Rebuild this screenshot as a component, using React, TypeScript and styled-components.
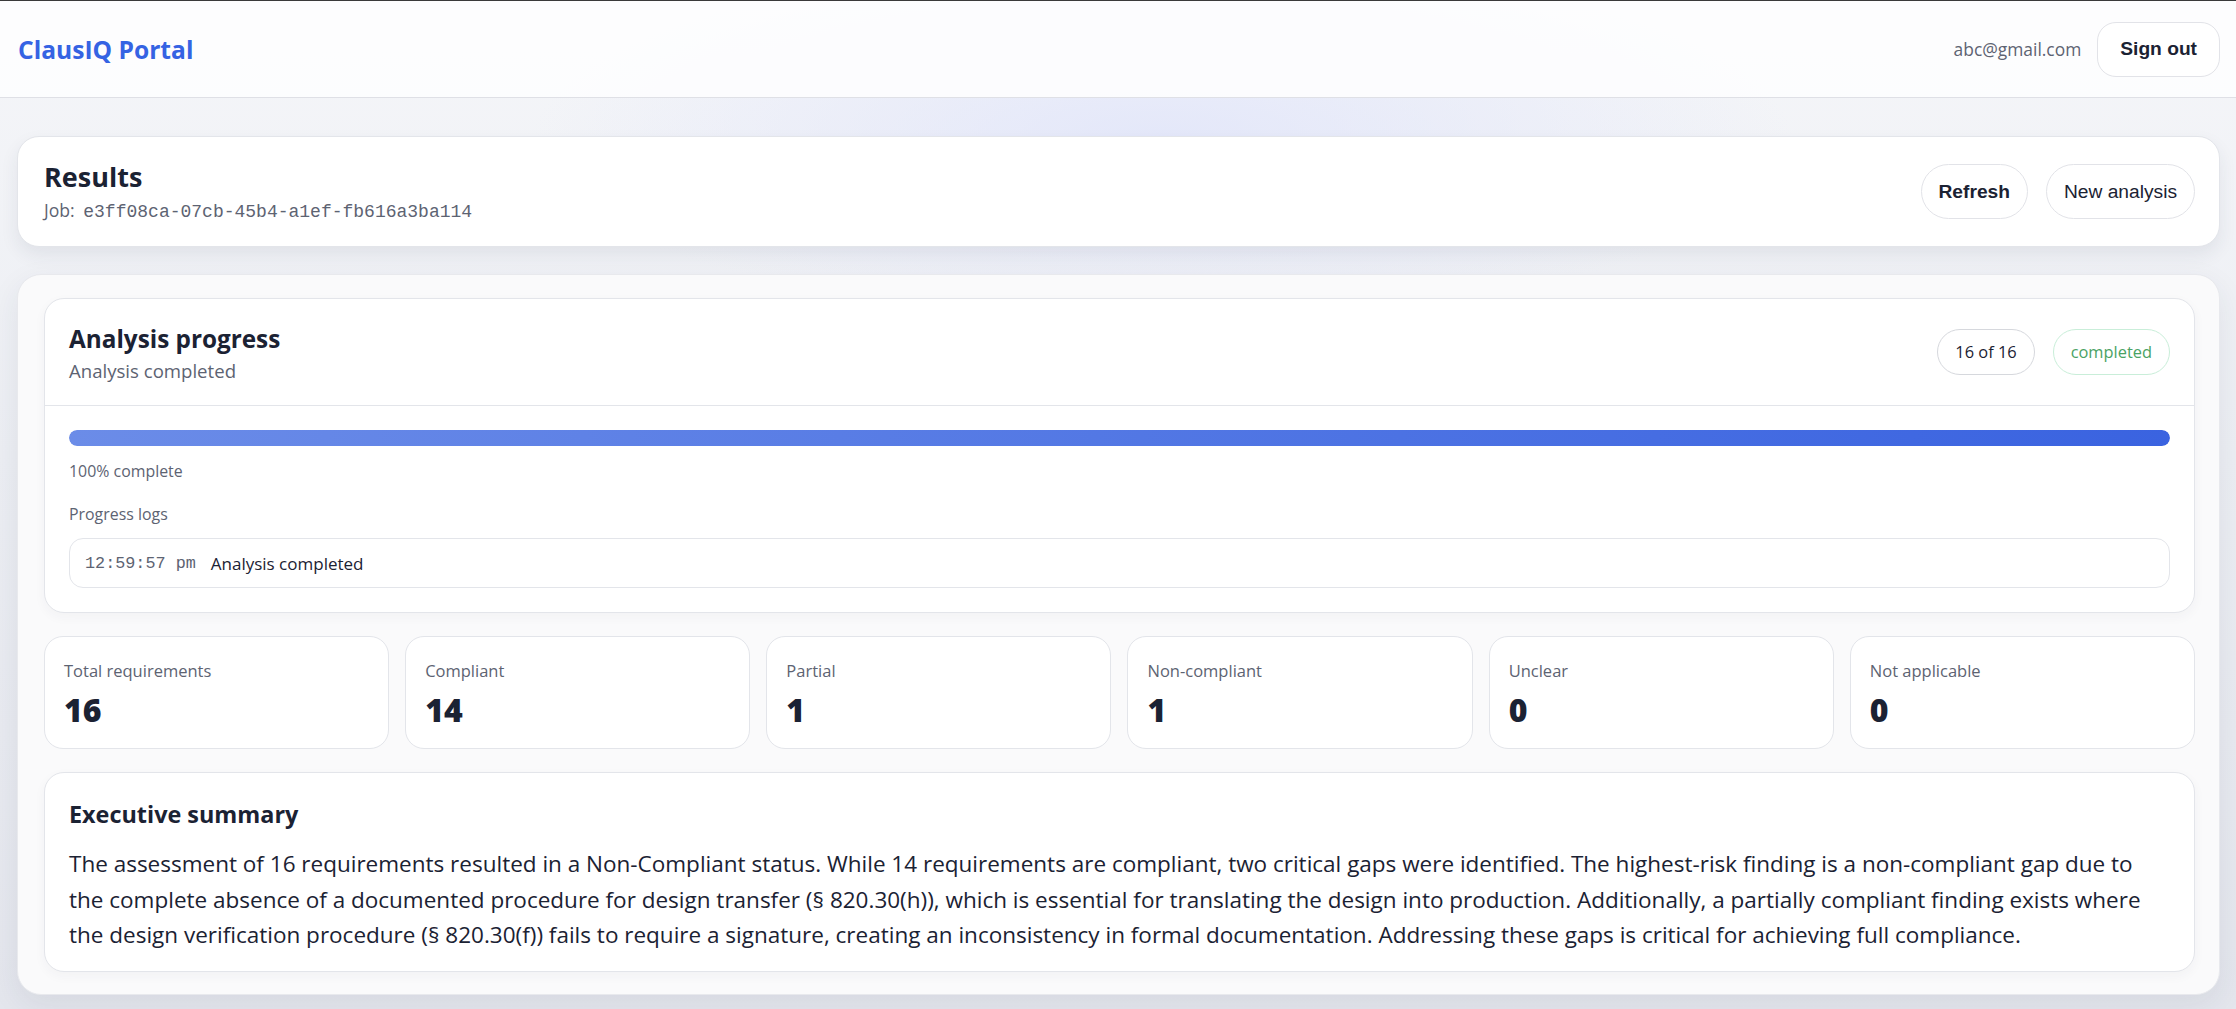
import React from 'react'
import styled, { createGlobalStyle } from 'styled-components'

const Colors = {
  brand: '#3563e3',
  ink: '#1b2233',
  muted: '#5d6372',
  line: '#e3e5ea',
  white: '#ffffff',
  panel: '#fafafb',
  green: '#4aa264',
  greenLine: '#c9eed9',
}

const sans = `"Open Sans", "Noto Sans", "Liberation Sans", sans-serif`
const mono = `"Liberation Mono", "DejaVu Sans Mono", monospace`
const buttonFont = `"Liberation Sans", Arial, sans-serif`

const GlobalStyle = createGlobalStyle`
  html, body {
    margin: 0;
    padding: 0;
  }
  body {
    min-height: 1009px;
    font-family: ${sans};
    color: ${Colors.ink};
    border-top: 1px solid #3a3a3a;
    background:
      radial-gradient(ellipse 900px 260px at 52% 140px, rgba(226, 230, 250, 0.9), rgba(226, 230, 250, 0) 70%),
      linear-gradient(180deg, #f5f6f9 0%, #eceef3 45%, #e4e6ed 100%);
  }
  * {
    box-sizing: border-box;
  }
`

const stats = [
  { label: 'Total requirements', value: 16 },
  { label: 'Compliant', value: 14 },
  { label: 'Partial', value: 1 },
  { label: 'Non-compliant', value: 1 },
  { label: 'Unclear', value: 0 },
  { label: 'Not applicable', value: 0 },
]

const summary =
  'The assessment of 16 requirements resulted in a Non-Compliant status. While 14 requirements are compliant, two critical gaps were identified. The highest-risk finding is a non-compliant gap due to the complete absence of a documented procedure for design transfer (§ 820.30(h)), which is essential for translating the design into production. Additionally, a partially compliant finding exists where the design verification procedure (§ 820.30(f)) fails to require a signature, creating an inconsistency in formal documentation. Addressing these gaps is critical for achieving full compliance.'

export default function App() {
  const done = 16
  const total = 16
  const percent = Math.round((done / total) * 100)

  return (
    <>
      <GlobalStyle />
      <TopBar>
        <Brand>ClausIQ Portal</Brand>
        <UserArea>
          <UserEmail>abc@gmail.com</UserEmail>
          <Button shape="soft" bold>Sign out</Button>
        </UserArea>
      </TopBar>

      <Main>
        <ResultsCard>
          <div>
            <PageTitle>Results</PageTitle>
            <JobLine>
              Job: <JobId>e3ff08ca-07cb-45b4-a1ef-fb616a3ba114</JobId>
            </JobLine>
          </div>
          <Actions>
            <Button shape="pill" bold>Refresh</Button>
            <Button shape="pill">New analysis</Button>
          </Actions>
        </ResultsCard>

        <Panel>
          <ProgressCard>
            <ProgressHeader>
              <div>
                <SectionTitle>Analysis progress</SectionTitle>
                <Subtitle>Analysis completed</Subtitle>
              </div>
              <Badges>
                <Badge>
                  {done} of {total}
                </Badge>
                <Badge tone="success">completed</Badge>
              </Badges>
            </ProgressHeader>
            <ProgressBody>
              <Track>
                <Fill style={{ width: `${percent}%` }} />
              </Track>
              <SmallText>{percent}% complete</SmallText>
              <LogsLabel>Progress logs</LogsLabel>
              <LogBox>
                <LogTime>12:59:57 pm</LogTime>
                <LogMessage>Analysis completed</LogMessage>
              </LogBox>
            </ProgressBody>
          </ProgressCard>

          <StatsGrid>
            {stats.map(({ label, value }) => (
              <StatCard key={label}>
                <StatLabel>{label}</StatLabel>
                <StatValue>{value}</StatValue>
              </StatCard>
            ))}
          </StatsGrid>

          <SummaryCard>
            <SummaryTitle>Executive summary</SummaryTitle>
            <SummaryText>{summary}</SummaryText>
          </SummaryCard>
        </Panel>
      </Main>
    </>
  )
}

const TopBar = styled.header`
  height: 97px;
  display: flex;
  align-items: center;
  justify-content: space-between;
  padding: 0 16px 0 18px;
  background: rgba(253, 253, 254, 0.92);
  border-bottom: 1px solid #dfe0e6;
`

const Brand = styled.div`
  font-size: 24.6px;
  font-weight: 700;
  color: ${Colors.brand};
`

const UserArea = styled.div`
  display: flex;
  align-items: center;
  gap: 16px;
`

const UserEmail = styled.span`
  font-size: 17.4px;
  color: ${Colors.muted};
`

const Button = styled.button<{ shape: 'pill' | 'soft'; bold?: boolean }>`
  height: 55px;
  padding: 0 ${(p) => (p.shape === 'soft' ? '22px' : '17px')};
  border: 1px solid #e2e3e8;
  border-radius: ${(p) => (p.shape === 'soft' ? '19px' : '999px')};
  background: ${Colors.white};
  color: ${Colors.ink};
  font-family: ${buttonFont};
  font-size: 19.2px;
  font-weight: ${(p) => (p.bold ? 700 : 400)};
  cursor: pointer;
`

const Main = styled.main`
  display: flex;
  flex-direction: column;
  gap: 27px;
  padding: 38px 16px 14px 17px;
`

const ResultsCard = styled.section`
  display: flex;
  align-items: center;
  justify-content: space-between;
  padding: 21px 24px 21px 26px;
  background: ${Colors.white};
  border: 1px solid ${Colors.line};
  border-radius: 22px;
  box-shadow: 0 8px 18px rgba(40, 48, 80, 0.08);
`

const PageTitle = styled.h1`
  margin: 0;
  font-size: 27px;
  line-height: 38px;
  font-weight: 700;
  color: ${Colors.ink};
`

const JobLine = styled.div`
  margin-top: 1px;
  font-size: 17.6px;
  line-height: 26px;
  color: ${Colors.muted};
`

const JobId = styled.span`
  margin-left: 4px;
  font-family: ${mono};
  font-size: 18px;
`

const Actions = styled.div`
  display: flex;
  gap: 18px;
`

const Panel = styled.section`
  display: flex;
  flex-direction: column;
  gap: 23px;
  padding: 23px 24px 22px 26px;
  background: ${Colors.panel};
  border: 1px solid #e8e9ed;
  border-radius: 24px;
  box-shadow: 0 10px 30px rgba(40, 48, 80, 0.08);
`

const ProgressCard = styled.div`
  background: ${Colors.white};
  border: 1px solid ${Colors.line};
  border-radius: 20px;
  box-shadow: 0 4px 12px rgba(40, 48, 80, 0.04);
`

const ProgressHeader = styled.div`
  display: flex;
  align-items: center;
  justify-content: space-between;
  padding: 24px 24px 20px;
  border-bottom: 1px solid ${Colors.line};
`

const SectionTitle = styled.h2`
  margin: 0;
  font-size: 24.3px;
  line-height: 32px;
  font-weight: 700;
  color: ${Colors.ink};
`

const Subtitle = styled.div`
  margin-top: 2px;
  font-size: 18.6px;
  line-height: 28px;
  color: ${Colors.muted};
`

const Badges = styled.div`
  display: flex;
  gap: 18px;
  margin-top: -5px;
`

const Badge = styled.span<{ tone?: 'success' }>`
  display: inline-flex;
  align-items: center;
  height: 46px;
  padding: 0 17px;
  border-radius: 999px;
  border: 1px solid ${(p) => (p.tone === 'success' ? Colors.greenLine : '#d6d8dd')};
  font-size: 16.4px;
  color: ${(p) => (p.tone === 'success' ? Colors.green : Colors.ink)};
`

const ProgressBody = styled.div`
  display: flex;
  flex-direction: column;
  padding: 24px 24px 24px;
`

const Track = styled.div`
  height: 16px;
  border-radius: 999px;
  background: #e8ebf3;
  overflow: hidden;
`

const Fill = styled.div`
  height: 100%;
  border-radius: 999px;
  background: linear-gradient(90deg, #6b8ce8 0%, #3a63e0 100%);
`

const SmallText = styled.div`
  margin-top: 14px;
  font-size: 15.9px;
  line-height: 22px;
  color: ${Colors.muted};
`

const LogsLabel = styled(SmallText)`
  margin-top: 21px;
`

const LogBox = styled.div`
  display: flex;
  align-items: center;
  gap: 15px;
  height: 50px;
  margin-top: 13px;
  padding: 0 15px;
  border: 1px solid ${Colors.line};
  border-radius: 14px;
`

const LogTime = styled.span`
  font-family: ${mono};
  font-size: 16.8px;
  color: ${Colors.muted};
`

const LogMessage = styled.span`
  font-size: 17px;
  color: ${Colors.ink};
`

const StatsGrid = styled.div`
  display: grid;
  grid-template-columns: repeat(6, 1fr);
  gap: 16px;
`

const StatCard = styled.div`
  height: 113px;
  padding: 22px 19px;
  background: ${Colors.white};
  border: 1px solid ${Colors.line};
  border-radius: 19px;
`

const StatLabel = styled.div`
  font-size: 16.5px;
  line-height: 24px;
  color: ${Colors.muted};
`

const StatValue = styled.div`
  margin-top: 7px;
  font-size: 32px;
  line-height: 40px;
  font-weight: 800;
  color: ${Colors.ink};
`

const SummaryCard = styled.div`
  padding: 26px 24px 18px;
  background: ${Colors.white};
  border: 1px solid ${Colors.line};
  border-radius: 20px;
  box-shadow: 0 4px 12px rgba(40, 48, 80, 0.04);
`

const SummaryTitle = styled.h3`
  margin: 0;
  font-size: 23.4px;
  line-height: 30px;
  font-weight: 700;
  color: ${Colors.ink};
`

const SummaryText = styled.p`
  margin: 17px 0 0;
  font-size: 22.5px;
  line-height: 35.6px;
  color: ${Colors.ink};
`
